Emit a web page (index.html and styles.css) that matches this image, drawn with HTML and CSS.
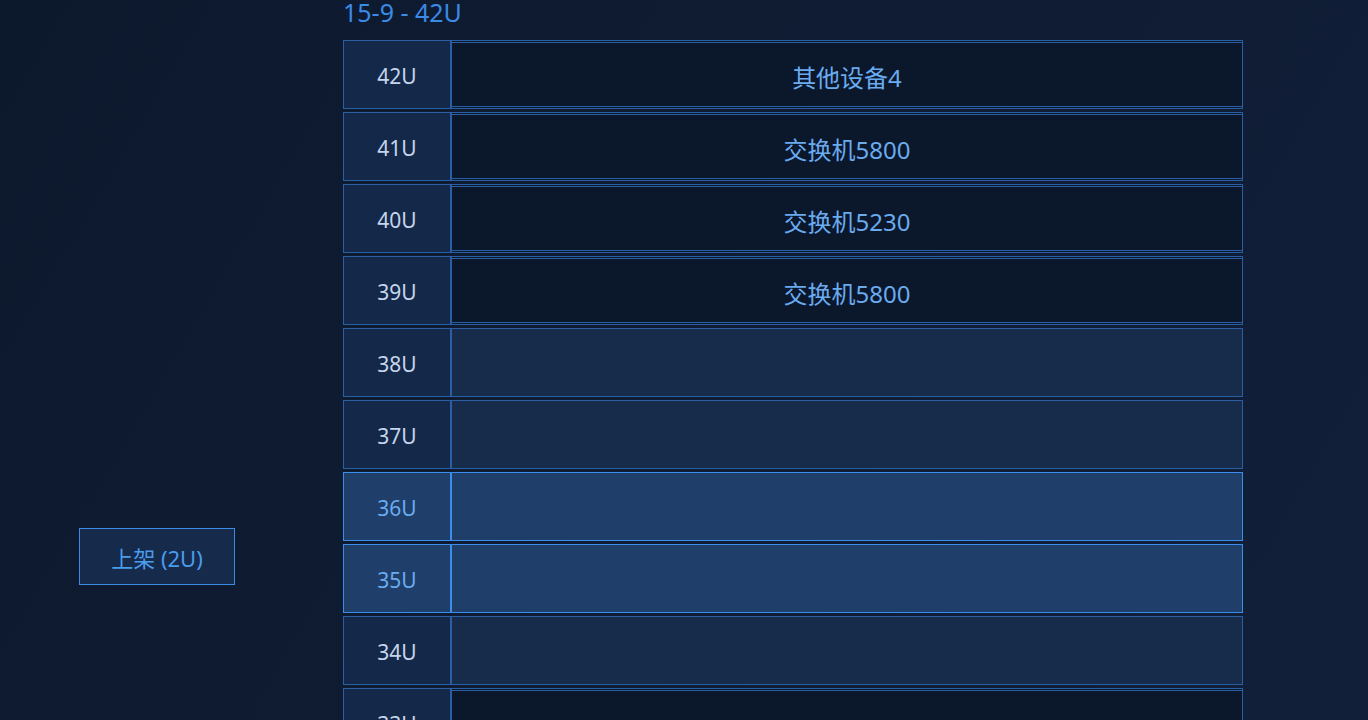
FILE: index.html
```html
<!DOCTYPE html>
<html>
<head>
<meta charset="utf-8">
<meta name="viewport" content="width=device-width, initial-scale=1.0">
<link rel="stylesheet" href="styles.css">
</head>
<body>
<div class="page">
  <div class="side">
    <button class="shelf-btn">上架 (2U)</button>
  </div>

  <div class="rack">
    <div class="rack-title">15-9 - 42U</div>

    <div class="slot"><div class="unit">42U</div><div class="dev busy">其他设备4</div></div>
    <div class="slot"><div class="unit">41U</div><div class="dev busy">交换机5800</div></div>
    <div class="slot"><div class="unit">40U</div><div class="dev busy">交换机5230</div></div>
    <div class="slot"><div class="unit">39U</div><div class="dev busy">交换机5800</div></div>
    <div class="slot"><div class="unit">38U</div><div class="dev"></div></div>
    <div class="slot"><div class="unit">37U</div><div class="dev"></div></div>
    <div class="slot pick"><div class="unit">36U</div><div class="dev"></div></div>
    <div class="slot pick"><div class="unit">35U</div><div class="dev"></div></div>
    <div class="slot"><div class="unit">34U</div><div class="dev"></div></div>
    <div class="slot"><div class="unit">33U</div><div class="dev busy"></div></div>
    <div class="slot"><div class="unit">32U</div><div class="dev busy"></div></div>
    <div class="slot"><div class="unit">31U</div><div class="dev"></div></div>
    <div class="slot"><div class="unit">30U</div><div class="dev"></div></div>
  </div>
</div>
</body>
</html>
```

FILE: styles.css
```css
* {
    box-sizing: border-box;
}

body {
    margin: 0;
    min-height: 100vh;
    background: linear-gradient(120deg, #0c192d 0%, #0f1c33 50%, #13203b 100%);
    font-family: "Noto Sans", "Noto Sans CJK SC", sans-serif;
    overflow: hidden;
}

.page {
    display: flex;
}

/* left panel with the action button */
.side {
    width: 343px;
    padding: 528px 0 0 79px;
}

.shelf-btn {
    width: 156px;
    height: 57px;
    padding: 0;
    background: #162a4b;
    border: 1px solid #3a8ae6;
    color: #4a9ceb;
    font-family: inherit;
    font-size: 22px;
}

/* rack column */
.rack {
    width: 900px;
}

.rack-title {
    height: 24px;
    margin-bottom: 16px;
    font-size: 25px;
    line-height: 25px;
    color: #3a8ae6;
}

.slot {
    display: flex;
    height: 69px;
    margin-bottom: 3px;
}

.unit {
    width: 108px;
    display: flex;
    align-items: center;
    justify-content: center;
    padding-top: 2px;
    background: #14284a;
    border: 1px solid #2a5fa4;
    color: #c5d5ea;
    font-size: 21px;
}

.dev {
    flex: 1;
    display: flex;
    align-items: center;
    justify-content: center;
    padding-top: 3px;
    background: #172b4b;
    border: 1px solid #2a5fa4;
    color: #6aabf0;
    font-size: 24px;
}

.dev.busy {
    background: #0b172b;
    box-shadow: inset 0 1px 0 #0b172b, inset 0 2px 0 #2a5fa4,
                inset 0 -1px 0 #0b172b, inset 0 -2px 0 #2a5fa4;
}

/* units chosen for the new device */
.slot.pick .unit,
.slot.pick .dev {
    background: #1f3e69;
    border-color: #3c8ceb;
    color: #6aabf0;
}
```
